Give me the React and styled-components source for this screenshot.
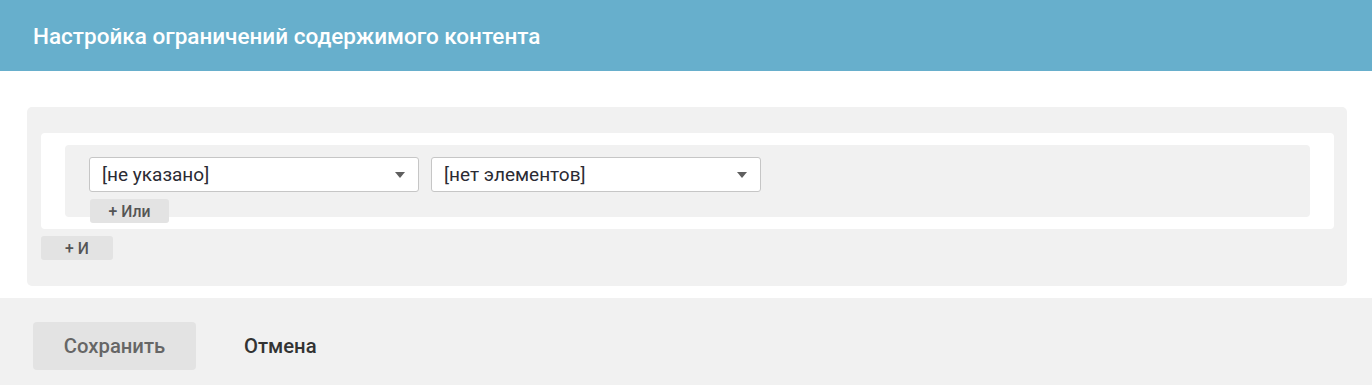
import React from "react";
import styled, { createGlobalStyle } from "styled-components";

const GlobalStyle = createGlobalStyle`
  body {
    margin: 0;
    background: #fff;
    font-family: Roboto, "Liberation Sans", sans-serif;
  }
`;

const Header = styled.header`
  height: 71px;
  background: #67afcc;
  display: flex;
  align-items: center;
  padding-left: 33px;
  h1 {
    margin: 0;
    color: #fff;
    font-size: 22.5px;
    font-weight: 500;
  }
`;

const Body = styled.main`
  padding: 36px 25px 12px 27px;
`;

const Panel = styled.section`
  background: #f1f1f1;
  border-radius: 5px;
  padding: 26px 13px 26px 14px;
`;

const Group = styled.div`
  background: #fff;
  border-radius: 4px;
  padding: 12px 24px;
  margin-bottom: 7px;
`;

const Condition = styled.div`
  background: #f1f1f1;
  border-radius: 4px;
  height: 72px;
  box-sizing: border-box;
  padding: 12px 24px 0;
`;

const Fields = styled.div`
  display: flex;
  gap: 12px;
  margin-bottom: 7px;
`;

const Select = styled.div`
  width: 330px;
  height: 35px;
  box-sizing: border-box;
  background: #fff;
  border: 1px solid #c6c6c6;
  border-radius: 3px;
  display: flex;
  align-items: center;
  justify-content: space-between;
  padding: 0 13px 0 12px;
  font-size: 19px;
  color: #2b2b33;
  &::after {
    content: "";
    border-left: 5px solid transparent;
    border-right: 5px solid transparent;
    border-top: 6px solid #5f5f5f;
  }
`;

const AddButton = styled.button`
  display: block;
  width: ${(p) => p.width}px;
  height: 24px;
  border: none;
  border-radius: 3px;
  background: #e3e3e3;
  color: #555;
  font-family: inherit;
  font-size: 15.75px;
  font-weight: 500;
  padding: 0;
  margin-left: ${(p) => p.offset || 0}px;
`;

const Footer = styled.footer`
  background: #f1f1f1;
  padding: 24px 33px 15px;
  display: flex;
  align-items: center;
`;

const Button = styled.button`
  height: 48px;
  border: none;
  border-radius: 4px;
  font-family: inherit;
  font-size: 20.25px;
  font-weight: 500;
  padding: 0 30px;
  background: ${(p) => (p.primary ? "#e3e3e3" : "transparent")};
  color: ${(p) => (p.primary ? "#666" : "#333")};
  width: ${(p) => (p.primary ? "163px" : "auto")};
  margin-left: ${(p) => (p.primary ? 0 : 18)}px;
`;

export default function App() {
  return (
    <>
      <GlobalStyle />
      <Header>
        <h1>Настройка ограничений содержимого контента</h1>
      </Header>
      <Body>
        <Panel>
          <Group>
            <Condition>
              <Fields>
                <Select>[не указано]</Select>
                <Select>[нет элементов]</Select>
              </Fields>
              <AddButton width={79} offset={1}>+ Или</AddButton>
            </Condition>
          </Group>
          <AddButton width={72}>+ И</AddButton>
        </Panel>
      </Body>
      <Footer>
        <Button primary>Сохранить</Button>
        <Button>Отмена</Button>
      </Footer>
    </>
  );
}
